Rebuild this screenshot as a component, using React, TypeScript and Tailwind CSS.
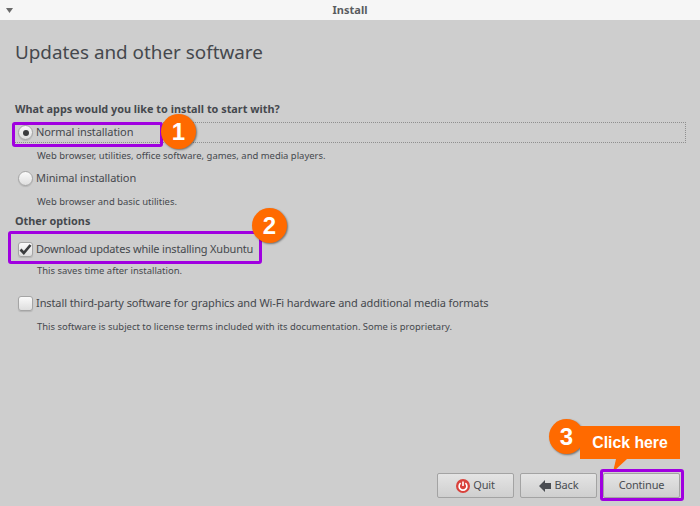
function Radio({ checked }: { checked?: boolean }) {
  return (
    <span className="flex h-[15px] w-[15px] shrink-0 items-center justify-center rounded-full border border-[#a5a5a5] bg-gradient-to-b from-[#fafafa] to-[#dedede] shadow-[0_1px_1px_rgba(0,0,0,0.12)]">
      {checked && <span className="h-[6px] w-[6px] rounded-full bg-[#3b3c3e]" />}
    </span>
  )
}

function Check({ checked }: { checked?: boolean }) {
  return (
    <span className="flex h-[15px] w-[15px] shrink-0 items-center justify-center rounded-[3px] border border-[#a5a5a5] bg-gradient-to-b from-[#fafafa] to-[#dedede] shadow-[0_1px_1px_rgba(0,0,0,0.12)]">
      {checked && (
        <svg width="13" height="13" viewBox="0 0 13 13" fill="none">
          <path d="M1.5 6.5 L4.8 10 L11.5 2" stroke="#3b3c3e" strokeWidth="2.7" />
        </svg>
      )}
    </span>
  )
}

function Badge({ n, className }: { n: number; className: string }) {
  return (
    <div className={`absolute flex h-[35px] w-[35px] items-center justify-center rounded-full bg-[#ff6a00] font-['Liberation_Sans',sans-serif] text-[24px] font-bold text-white shadow-[1px_1px_2px_rgba(0,0,0,0.45)] ${className}`}>
      {n}
    </div>
  )
}

const btn = 'flex h-[25px] w-[77px] items-center justify-center rounded-[2px] border border-[#a3a3a3] bg-gradient-to-b from-[#e4e4e4] to-[#cfcfcf] text-[11px] tracking-[-0.18px] text-[#4a4d52]'
const option = 'ml-[3px] flex h-[20px] items-center gap-[3px] text-[11px]'
const hint = 'ml-[22px] text-[9.45px] leading-[14px]'
const label = 'text-[10.85px] font-bold leading-[16px]'

export default function App() {
  return (
    <div className="relative flex h-[506px] w-[700px] flex-col overflow-hidden bg-[#cecece] font-['Noto_Sans',sans-serif] text-[#45484d]">
      <div className="flex h-[20px] shrink-0 items-center justify-center bg-[#f6f6f6] text-[11px] font-bold text-[#5a5c60]">
        <svg className="absolute left-[6px] top-[8px]" width="7" height="5" viewBox="0 0 7 5">
          <path d="M0 0 H7 L3.5 5 Z" fill="#6a6a6a" />
        </svg>
        Install
      </div>

      <div className="flex flex-1 flex-col px-[15px]">
        <h1 className="mt-[19px] text-[18.85px] leading-[26px] text-[#45484d]">Updates and other software</h1>

        <p className={`mt-[36px] ${label}`}>What apps would you like to install to start with?</p>

        <div className="-ml-[1px] mt-[5px] flex h-[21px] w-[672px] items-center gap-[3px] border border-dotted border-[#8f8f8f] pl-[3px] text-[11px]">
          <Radio checked />
          <span className="tracking-[-0.08px]">Normal installation</span>
        </div>
        <p className={`mt-[6px] ${hint}`}>Web browser, utilities, office software, games, and media players.</p>

        <div className={`mt-[5px] ${option}`}>
          <Radio />
          <span className="tracking-[-0.08px]">Minimal installation</span>
        </div>
        <p className={`mt-[7px] ${hint}`}>Web browser and basic utilities.</p>

        <p className={`mt-[4px] ${label}`}>Other options</p>

        <div className={`mt-[10px] ${option}`}>
          <Check checked />
          <span className="tracking-[-0.18px]">Download updates while installing Xubuntu</span>
        </div>
        <p className={`mt-[5px] ${hint}`}>This saves time after installation.</p>

        <div className={`mt-[15px] ${option}`}>
          <Check />
          <span className="tracking-[-0.1px]">Install third-party software for graphics and Wi-Fi hardware and additional media formats</span>
        </div>
        <p className={`mt-[7px] ${hint}`}>This software is subject to license terms included with its documentation. Some is proprietary.</p>

        <div className="mt-auto mb-[8px] mr-[5px] flex justify-end gap-[6px]">
          <div className={btn}>
            <svg className="mr-[3px]" width="14" height="14" viewBox="0 0 14 14" fill="none">
              <circle cx="7" cy="7" r="7" fill="#d9413b" />
              <path d="M4.6 4.2 A3.9 3.9 0 1 0 9.4 4.2 M7 2.6 V7" stroke="#fff" strokeWidth="1.6" />
            </svg>
            Quit
          </div>
          <div className={btn}>
            <svg className="mr-[4px]" width="12" height="12" viewBox="0 0 12 12">
              <path d="M0 6 L6 0 V3 H12 V9 H6 V12 Z" fill="#4a4d52" />
            </svg>
            Back
          </div>
          <div className={btn}>Continue</div>
        </div>
      </div>

      {/* annotations */}
      <div className="absolute left-[12px] top-[122px] h-[25px] w-[151px] rounded-[3px] border-[3px] border-[#a000e0]" />
      <Badge n={1} className="left-[161px] top-[114px]" />
      <div className="absolute left-[8px] top-[231px] h-[33px] w-[254px] rounded-[3px] border-[3px] border-[#a000e0]" />
      <Badge n={2} className="left-[252px] top-[208px]" />
      <Badge n={3} className="left-[549px] top-[419px]" />
      <div className="absolute left-[580px] top-[426px] flex h-[33px] w-[100px] items-center justify-center bg-[#ff6a00] font-['Liberation_Sans',sans-serif] text-[15.8px] font-bold text-white">
        Click here
      </div>
      <svg className="absolute left-[610px] top-[459px]" width="22" height="13" viewBox="0 0 22 13">
        <path d="M6 0 H17 L3 13 Z" fill="#ff6a00" />
      </svg>
      <div className="absolute left-[600px] top-[469px] h-[32px] w-[84px] rounded-[3px] border-[3px] border-[#a000e0]" />
    </div>
  )
}
